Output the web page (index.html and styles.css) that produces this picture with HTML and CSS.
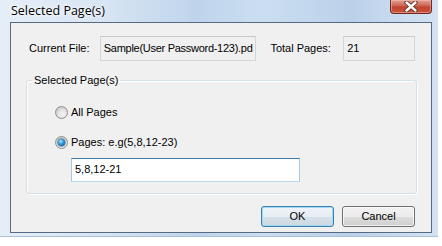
FILE: index.html
```html
<!DOCTYPE html>
<html>
<head>
<meta charset="utf-8">
<link rel="stylesheet" href="styles.css">
</head>
<body>
<div class="window">
  <div class="titlebar">
    <span class="title">Selected Page(s)</span>
    <div class="close">
      <svg width="16" height="11" viewBox="0 0 16 11">
        <path d="M3.5 1.5 L12.5 9.5 M12.5 1.5 L3.5 9.5" stroke="#5a2b24" stroke-width="4.2" stroke-linecap="round" fill="none"/>
        <path d="M3.5 1.5 L12.5 9.5 M12.5 1.5 L3.5 9.5" stroke="#ffffff" stroke-width="2.4" stroke-linecap="round" fill="none"/>
      </svg>
    </div>
  </div>
  <div class="client">
    <div class="info-row">
      <span class="lbl lbl-file">Current File:</span>
      <div class="ro ro-file">Sample(User Password-123).pd</div>
      <span class="lbl lbl-total">Total Pages:</span>
      <div class="ro ro-total">21</div>
    </div>
    <fieldset class="group">
      <legend>Selected Page(s)</legend>
      <div class="group-body">
        <div class="radio-row"><span class="radio"></span><span>All Pages</span></div>
        <div class="radio-row second"><span class="radio checked"></span><span>Pages: e.g(5,8,12-23)</span></div>
        <div class="pages-input">5,8,12-21</div>
      </div>
    </fieldset>
    <div class="buttons">
      <div class="btn default">OK</div>
      <div class="btn">Cancel</div>
    </div>
  </div>
</div>
</body>
</html>
```
FILE: styles.css
```css
html, body {
  margin: 0;
  padding: 0;
  background: #ffffff;
}
body {
  width: 442px;
  height: 246px;
  overflow: hidden;
  font-family: "Liberation Sans", Arial, sans-serif;
  font-size: 11px;
  color: #000;
}
.window {
  box-sizing: border-box;
  width: 438px;
  height: 237px;
  padding: 0 6px 3px 10px;
  background: linear-gradient(90deg, #e6eef7 0%, #d6e4f3 25%, #bfd4eb 45%, #cbdef1 60%, #bbd1e9 80%, #d4e3f3 100%);
  border-bottom: 1px solid #a9c0da;
  display: flex;
  flex-direction: column;
}
.titlebar {
  height: 22px;
  display: flex;
  justify-content: space-between;
  align-items: flex-start;
  margin-left: -10px;
}
.title {
  font-family: "Open Sans", "Noto Sans", sans-serif;
  font-size: 12.5px;
  line-height: 22px;
  padding-left: 11px;
  color: #000;
  text-shadow: 0 0 6px #ffffff, 0 0 3px #ffffff;
}
.close {
  box-sizing: border-box;
  width: 42px;
  height: 14px;
  border: 1px solid #6e2a22;
  border-top: none;
  border-radius: 0 0 4px 4px;
  background: linear-gradient(180deg, #e2a294 0%, #cf6b58 40%, #c04530 55%, #c9543c 100%);
  box-shadow: inset 0 0 0 1px rgba(255, 200, 190, 0.45);
  display: flex;
  align-items: center;
  justify-content: center;
}
.client {
  flex: 1;
  background: #f0f0f0;
  border: 1px solid #566a82;
  padding: 13px 16px 0 15px;
  display: flex;
  flex-direction: column;
}
.info-row {
  display: flex;
  align-items: center;
  height: 25px;
  padding-left: 3px;
}
.lbl {
  line-height: 25px;
  white-space: nowrap;
}
.lbl-file { width: 71px; }
.lbl-total { width: 73px; margin-left: 14px; }
.ro {
  box-sizing: border-box;
  height: 25px;
  line-height: 23px;
  border: 1px solid #d5d5d5;
  border-top-color: #c9c9c9;
  background: #f0f0f0;
  padding-left: 3px;
  white-space: nowrap;
  overflow: hidden;
}
.ro-file { width: 157px; letter-spacing: -0.28px; }
.ro-total { width: 72px; }
.group {
  box-sizing: border-box;
  width: 391px;
  margin: 13px 0 0 0;
  padding: 0;
  border: 1px solid #d5dfe5;
  border-radius: 3px;
  box-shadow: inset 1px 1px 0 #ffffff, 1px 1px 0 #ffffff;
}
.group legend {
  margin-left: 5px;
  padding: 0 2px;
  line-height: 13px;
  font-size: 11px;
}
.group-body {
  padding: 18px 0 11px 28px;
  display: flex;
  flex-direction: column;
}
.radio-row {
  display: flex;
  align-items: center;
  gap: 3px;
  height: 15px;
  line-height: 15px;
}
.radio-row.second { margin-top: 15px; }
.radio {
  box-sizing: border-box;
  width: 13px;
  height: 13px;
  border-radius: 50%;
  border: 1px solid #8e8f8f;
  background: radial-gradient(circle at 60% 65%, #f4f4f4 0%, #e2e2e2 45%, #c9c9c9 75%, #ececec 100%);
  display: flex;
  align-items: center;
  justify-content: center;
}
.radio.checked::after {
  content: "";
  width: 7px;
  height: 7px;
  border-radius: 50%;
  background: radial-gradient(circle at 40% 35%, #b8eafc 0%, #3ea6dd 35%, #125d9c 80%, #0c3f70 100%);
  box-shadow: 0 0 0 0.5px #1b4f7f;
}
.pages-input {
  box-sizing: border-box;
  width: 229px;
  height: 24px;
  margin: 8px 0 0 16px;
  padding-left: 3px;
  line-height: 21px;
  background: #ffffff;
  border: 1px solid #a6c8e3;
  border-top-color: #3d7bad;
  border-bottom-color: #b7d9ed;
  white-space: nowrap;
}
.buttons {
  display: flex;
  justify-content: flex-end;
  gap: 8px;
  margin-top: 12px;
}
.btn {
  box-sizing: border-box;
  width: 73px;
  height: 21px;
  line-height: 19px;
  text-align: center;
  border: 1px solid #707070;
  border-radius: 3px;
  background: linear-gradient(180deg, #f2f2f2 0%, #ebebeb 50%, #dddddd 51%, #cfcfcf 100%);
  box-shadow: inset 0 0 0 1px rgba(255, 255, 255, 0.7);
}
.btn.default {
  border-color: #3c7fb1;
  background: linear-gradient(180deg, #eef4f8 0%, #e6edf3 50%, #d6e0e8 51%, #cdd8e1 100%);
  box-shadow: inset 0 0 0 1px #9fdaf4;
}
```
